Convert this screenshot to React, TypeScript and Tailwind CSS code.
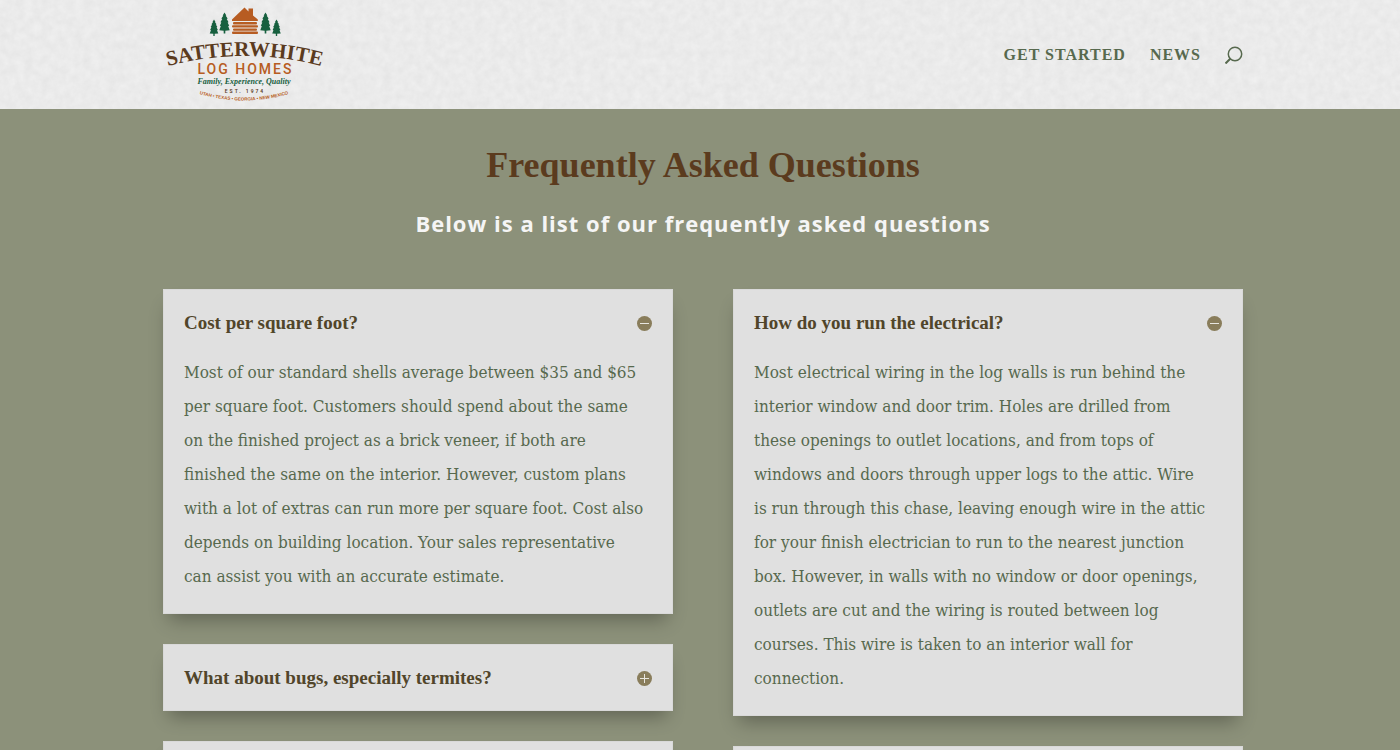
import React, { Fragment, useState } from "react";

interface Faq {
    id: string;
    question: string;
    answer: string[];
    open?: boolean;
}

const leftFaqs: Faq[] = [
    {
        id: "cost",
        question: "Cost per square foot?",
        answer: [
            "Most of our standard shells average between $35 and $65",
            "per square foot. Customers should spend about the same",
            "on the finished project as a brick veneer, if both are",
            "finished the same on the interior. However, custom plans",
            "with a lot of extras can run more per square foot. Cost also",
            "depends on building location. Your sales representative",
            "can assist you with an accurate estimate.",
        ],
        open: true,
    },
    {
        id: "bugs",
        question: "What about bugs, especially termites?",
        answer: [],
    },
    {
        id: "left-more",
        question: "",
        answer: [],
    },
];

const rightFaqs: Faq[] = [
    {
        id: "electrical",
        question: "How do you run the electrical?",
        answer: [
            "Most electrical wiring in the log walls is run behind the",
            "interior window and door trim. Holes are drilled from",
            "these openings to outlet locations, and from tops of",
            "windows and doors through upper logs to the attic. Wire",
            "is run through this chase, leaving enough wire in the attic",
            "for your finish electrician to run to the nearest junction",
            "box. However, in walls with no window or door openings,",
            "outlets are cut and the wiring is routed between log",
            "courses. This wire is taken to an interior wall for",
            "connection.",
        ],
        open: true,
    },
    {
        id: "right-more",
        question: "",
        answer: [],
    },
];

const TREE =
    "M0 0 L1.8 3 L1.2 3.300 L3.100 6 L2.200 6.300 L4 9.500 L3.100 9.800 L4.600 13 L3.600 13.300 L5.100 17.500 L.8 17.800 L.8 20.500 L-.8 20.500 L-.8 17.800 L-5.100 17.500 L-3.600 13.300 L-4.600 13 L-3.100 9.800 L-4 9.500 L-2.200 6.300 L-3.100 6 L-1.2 3.300 L-1.800 3 Z";

function Logo() {
    return (
        <svg width="160" height="100" viewBox="0 0 160 100" className="overflow-visible" role="img" aria-label="Satterwhite Log Homes">
            <defs>
                <path id="name-arc" d="M-1 62 Q79.500 40 160 62" />
                <path id="states-arc" d="M31 88 Q79 103 127 88" />
            </defs>
            {/* Trees */}
            <g fill="#17603f">
                <path d={TREE} transform="translate(49 14.500) scale(.84 .8)" />
                <path d={TREE} transform="translate(59.500 7.500) scale(1.02)" />
                <path d={TREE} transform="translate(100.500 7.500) scale(1.02)" />
                <path d={TREE} transform="translate(111.500 14.500) scale(.84 .8)" />
            </g>
            {/* Cabin */}
            <g fill="#b75c22">
                <path d="M67 14.500 L79.500 2.500 L83.500 6.500 V3.500 H88 V10.500 L92.800 14.500 V16 H67 Z" />
                <rect x="68" y="17" width="24" height="2.400" rx="1" />
                <rect x="67" y="20.200" width="26" height="2.400" rx="1" />
                <rect x="68" y="23.400" width="24" height="2.400" rx="1" />
                <rect x="67" y="26.600" width="26" height="2.400" rx="1" />
            </g>
            <text fill="#5b3b1e" fontFamily="Liberation Serif, serif" fontWeight="700" fontSize="21" textAnchor="middle">
                <textPath href="#name-arc" startOffset="50%">SATTERWHITE</textPath>
            </text>
            <text x="80.500" y="69" fill="#b75c22" fontFamily="Roboto, sans-serif" fontWeight="500" fontSize="14" letterSpacing="2" textAnchor="middle">
                LOG HOMES
            </text>
            <text x="79" y="79" fill="#17603f" fontFamily="Liberation Serif, serif" fontStyle="italic" fontWeight="700" fontSize="8" textAnchor="middle">
                Family, Experience, Quality
            </text>
            <text x="80" y="88" fill="#5b3b1e" fontFamily="Roboto, sans-serif" fontWeight="600" fontSize="5" letterSpacing="2" textAnchor="middle">
                EST. 1974
            </text>
            <text fill="#b75c22" fontFamily="Liberation Sans, sans-serif" fontWeight="700" fontSize="4.500" textAnchor="middle">
                <textPath href="#states-arc" startOffset="50%">UTAH • TEXAS • GEORGIA • NEW MEXICO</textPath>
            </text>
        </svg>
    );
}

function PaperTexture() {
    return (
        <svg className="absolute inset-0 h-full w-full" aria-hidden="true">
            <filter id="paper" x="0" y="0" width="100%" height="100%" colorInterpolationFilters="sRGB">
                <feTurbulence type="fractalNoise" baseFrequency="0.12" numOctaves="4" seed="4" />
                <feColorMatrix values="0.05 0 0 0 0.895  0.05 0 0 0 0.895  0.05 0 0 0 0.895  0 0 0 0 1" />
            </filter>
            <rect width="100%" height="100%" filter="url(#paper)" />
        </svg>
    );
}

function FaqCard({ faq }: { faq: Faq }) {
    const [open, setOpen] = useState(!!faq.open);

    return (
        <div className="border border-[#d9d9d9] bg-[#e0e0e0] p-5 shadow-[0_12px_18px_-6px_rgba(0,0,0,0.3)]">
            <h3>
                <button
                    type="button"
                    aria-expanded={open}
                    aria-label={faq.question || "Show answer"}
                    onClick={() => setOpen(!open)}
                    className="flex min-h-[25px] w-full cursor-pointer items-center justify-between text-left font-['Liberation_Serif',serif] text-[19px] leading-[25px] font-bold text-[#51452a]"
                >
                    <span>{faq.question}</span>
                    <svg width="16" height="16" viewBox="0 0 16 16" className="shrink-0" aria-hidden="true">
                        <circle cx="8.500" cy="8.500" r="7.500" fill="#897d5b" />
                        <path d={open ? "M4 8.500 H13" : "M4 8.500 H13 M8.500 4 V13"} stroke="#e8e6df" strokeWidth="1" />
                    </svg>
                </button>
            </h3>
            {open && faq.answer.length > 0 && (
                <p id={faq.id} className="mt-5 font-['DejaVu_Serif_Condensed','DejaVu_Serif',serif] text-[17px] leading-[34px] text-[#57694e]">
                    {faq.answer.map((line, i) => (
                        <Fragment key={i}>
                            {i > 0 && <br className="hidden lg:inline" />}
                            {line}{" "}
                        </Fragment>
                    ))}
                </p>
            )}
        </div>
    );
}

export default function App() {
    return (
        <div className="h-screen overflow-x-hidden overflow-y-auto bg-[#8c917a] [scrollbar-width:none]">
            {/* Header */}
            <header className="relative bg-[#ececec] pl-[6px]">
                <PaperTexture />
                <div className="relative mx-auto flex h-[109px] max-w-[1080px] items-center justify-between pl-[2px]">
                    <a href="#home">
                        <Logo />
                    </a>
                    <nav className="flex items-center gap-6 font-['Liberation_Serif',serif] text-[16px] font-bold tracking-[1px] text-[#57694e]">
                        <a href="#get-started">GET STARTED</a>
                        <a href="#news">NEWS</a>
                        <button type="button" aria-label="Search" className="cursor-pointer">
                            <svg width="18" height="18" viewBox="0 0 18 18" fill="none" stroke="#57694e" strokeWidth="1.500">
                                <circle cx="10" cy="8" r="6.700" />
                                <path d="M5.500 12.500 L.5 17.500" strokeWidth="2" />
                            </svg>
                        </button>
                    </nav>
                </div>
            </header>

            {/* Questions */}
            <main className="pb-10 pl-[6px]">
                <div className="mx-auto max-w-[1080px]">
                    <h1 className="pt-8 text-center font-['Liberation_Serif',serif] text-[36px] leading-[48px] font-bold text-[#5b3b1e]">
                        Frequently Asked Questions
                    </h1>
                    <h2 className="mt-4 text-center font-['Open_Sans',sans-serif] text-[22px] leading-[36px] font-bold tracking-[1px] text-[#f5f5f5]">
                        Below is a list of our frequently asked questions
                    </h2>
                    <div className="mt-12 grid grid-cols-1 items-start gap-x-[60px] gap-y-[30px] md:grid-cols-2">
                        <div className="flex flex-col gap-[30px]">
                            {leftFaqs.map((faq) => (
                                <FaqCard key={faq.id} faq={faq} />
                            ))}
                        </div>
                        <div className="flex flex-col gap-[30px]">
                            {rightFaqs.map((faq) => (
                                <FaqCard key={faq.id} faq={faq} />
                            ))}
                        </div>
                    </div>
                </div>
            </main>
        </div>
    );
}
